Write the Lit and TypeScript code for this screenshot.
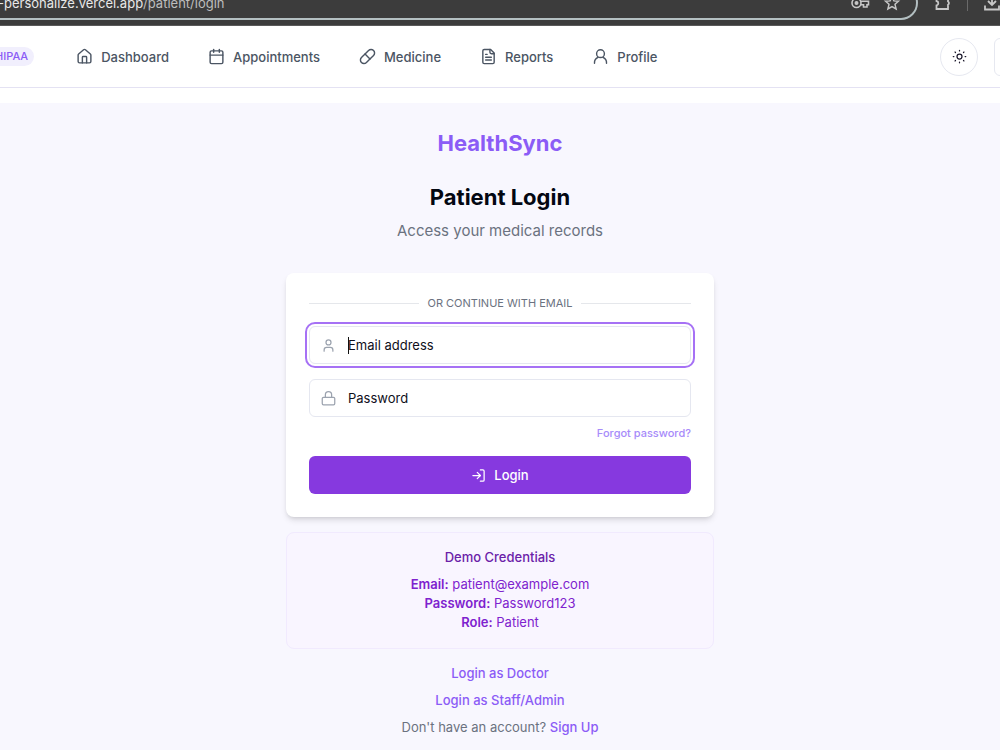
import { LitElement, html, css, svg } from "lit";
import { customElement } from "lit/decorators.js";

const icon = (body: unknown, cls = "icon") => html`
  <svg class=${cls} viewBox="0 0 24 24" fill="none" stroke="currentColor" stroke-width="2"
    stroke-linecap="round" stroke-linejoin="round" aria-hidden="true">${body}</svg>`;

const house = svg`<path d="M15 21v-8a1 1 0 0 0-1-1h-4a1 1 0 0 0-1 1v8"/><path d="M3 10a2 2 0 0 1 .709-1.528l7-5.999a2 2 0 0 1 2.582 0l7 5.999A2 2 0 0 1 21 10v9a2 2 0 0 1-2 2H5a2 2 0 0 1-2-2z"/>`;
const calendar = svg`<path d="M8 2v4"/><path d="M16 2v4"/><rect width="18" height="18" x="3" y="4" rx="2"/><path d="M3 10h18"/>`;
const pill = svg`<path d="m10.5 20.5 10-10a4.95 4.95 0 1 0-7-7l-10 10a4.95 4.95 0 1 0 7 7Z"/><path d="m8.5 8.5 7 7"/>`;
const report = svg`<path d="M15 2H6a2 2 0 0 0-2 2v16a2 2 0 0 0 2 2h12a2 2 0 0 0 2-2V7Z"/><path d="M14 2v4a2 2 0 0 0 2 2h4"/><path d="M10 9H8"/><path d="M16 13H8"/><path d="M16 17H8"/>`;
const userRound = svg`<circle cx="12" cy="8" r="5.5"/><path d="M3.5 21.5a8.5 8.5 0 0 1 5-8.2M20.500 21.5a8.500 8.500 0 0 0-5-8.2"/>`;
const user = svg`<path d="M19 21v-2a4 4 0 0 0-4-4H9a4 4 0 0 0-4 4v2"/><circle cx="12" cy="7" r="4"/>`;
const lock = svg`<rect width="20" height="12" x="2" y="10" rx="2"/><path d="M7 10V6a5 5 0 0 1 10 0v4"/>`;
const login = svg`<path d="M15 3h4a2 2 0 0 1 2 2v14a2 2 0 0 1-2 2h-4"/><path d="m10 17 5-5-5-5"/><path d="M15 12H3"/>`;
const sun = svg`<circle cx="12" cy="12" r="4"/><path d="M12 2v1M12 21v1M4.900 4.900l.7.7M18.400 18.400l.7.7M2 12h1M21 12h1M5.600 18.400l-.7.7M19.100 4.900l-.7.7"/>`;

@customElement("browser-bar")
class BrowserBar extends LitElement {
  static styles = css`
    :host { display: block; }
    .bar {
      display: flex; align-items: flex-end; height: 20px; padding-bottom: 5px;
      overflow: hidden; background: #3c3c3c; border-bottom: 1px solid #5a5a5a;
      color: #c7c7c7; box-sizing: content-box;
    }
    .address {
      box-sizing: border-box; flex: 1; height: 34px; margin-left: -24px; padding: 0 15px 0 22px;
      display: flex; align-items: center; gap: 13px;
      border: 2px solid #b3bfc1; border-left: 0; border-radius: 0 17px 17px 0;
    }
    .url { flex: 1; font: 13px/20px Inter, "Liberation Sans", sans-serif; color: #e8e8e8; white-space: nowrap; }
    .path { color: #bdbdbd; }
    .tools { display: flex; align-items: center; height: 34px; padding-left: 16px; gap: 15px; margin-right: -1px; }
    .key { width: 20px; height: 18px; }
    .glyph { width: 18px; height: 18px; }
    .rule { width: 1px; height: 16px; background: #6a6a6a; }
  `;
  render() {
    return html`
      <div class="bar">
        <div class="address">
          <div class="url">-personalize.vercel.app<span class="path">/patient/login</span></div>
          <svg class="key" viewBox="0 0 20 18" fill="none" stroke="currentColor" stroke-width="1.600">
            <circle cx="6.500" cy="9" r="4.500"/><circle cx="6.500" cy="9" r="1.200" fill="currentColor"/>
            <path d="M10.500 7.200H18.500V10.800H17V13H13.500V10.800H10.500"/>
          </svg>
          <svg class="glyph" viewBox="0 0 18 18" fill="none" stroke="currentColor" stroke-width="1.500">
            <path d="m9 2.500 1.900 4.300 4.600.4-3.500 3.100 1.100 4.600L9 12.500l-4.100 2.400L6 10.300 2.500 7.200l4.600-.4z"/>
          </svg>
        </div>
        <div class="tools">
          <svg class="glyph" viewBox="0 0 18 18" fill="none" stroke="currentColor" stroke-width="1.800">
            <path d="M2.500 3H6a2 2 0 0 1 4 0h4v4.500a1.800 1.800 0 0 1 0 3.200V15H2.500v-3.500a2.300 2.300 0 0 0 0-4.500z"/>
          </svg>
          <span class="rule"></span>
          <svg class="glyph" viewBox="0 0 18 18" fill="none" stroke="currentColor" stroke-width="1.800">
            <path d="M9 1v10M5 7l4 4 4-4M2 11.500V15.500h14v-4"/>
          </svg>
        </div>
      </div>`;
  }
}

@customElement("site-nav")
class SiteNav extends LitElement {
  static styles = css`
    :host { display: block; font-family: Inter, "Liberation Sans", sans-serif; }
    .nav {
      display: flex; align-items: center; height: 61px; overflow: hidden;
      background: #fff; border-bottom: 1px solid #e4e2f3;
    }
    .badge {
      margin-left: -11px; padding: 0 6px; border-radius: 10px; background: #f1effd;
      color: #8b5cf6; font-size: 11px; line-height: 19px; font-weight: 500;
    }
    .links { display: flex; gap: 39px; margin-left: 42px; }
    .link {
      display: flex; align-items: center; gap: 8px; color: #4b5563; text-decoration: none;
      font-size: 13px; line-height: 20px; font-weight: 500;
    }
    .icon { width: 17px; height: 17px; }
    .actions { display: flex; gap: 16px; margin-left: auto; margin-right: -32px; }
    .round, .square {
      box-sizing: border-box; width: 38px; height: 38px; padding: 0; background: #fff;
      border: 1px solid #e6e8f0; color: #1e1b2e; display: grid; place-items: center;
    }
    .round { border-radius: 50%; }
    .square { border-radius: 6px; }
    .sun { width: 15px; height: 15px; }
  `;
  render() {
    const items = [
      ["Dashboard", house], ["Appointments", calendar], ["Medicine", pill],
      ["Reports", report], ["Profile", userRound],
    ] as const;
    return html`
      <nav class="nav">
        <span class="badge">HIPAA</span>
        <div class="links">
          ${items.map(([label, body]) => html`<a class="link" href="#">${icon(body)}<span>${label}</span></a>`)}
        </div>
        <div class="actions">
          <button class="round" aria-label="Toggle theme">${icon(sun, "sun")}</button>
          <button class="square" aria-label="Menu"></button>
        </div>
      </nav>`;
  }
}

@customElement("login-panel")
class LoginPanel extends LitElement {
  static styles = css`
    :host { display: block; font-family: Inter, "Liberation Sans", sans-serif; }
    .panel { max-width: 428px; margin: 0 auto; text-align: center; }
    .brand { margin: 0; font-size: 22px; line-height: 30px; font-weight: 700; color: #8b5cf6; }
    .title { margin: 24px 0 0; font-size: 22px; line-height: 30px; font-weight: 700; color: #030712; }
    .lead { margin: 7px 0 0; font-size: 15px; line-height: 24px; color: #6b7280; }
    .card {
      margin-top: 30px; padding: 23px; border-radius: 8px; background: #fff;
      box-shadow: 0 4px 6px -1px rgb(0 0 0 / 0.12), 0 2px 4px -2px rgb(0 0 0 / 0.12);
    }
    .divider { display: flex; align-items: center; gap: 8px; font-size: 11px; line-height: 15px; color: #6b7280; }
    .divider::before, .divider::after { content: ""; flex: 1; height: 1px; background: #e5e7eb; }
    .field {
      box-sizing: border-box; display: flex; align-items: center; gap: 12px; position: relative;
      height: 38px; margin-top: 15px; padding: 0 11px; border: 1px solid #e5e7f0; border-radius: 6px;
    }
    .active { outline: 2px solid #a671f5; outline-offset: 2px; }
    .icon { width: 15px; height: 15px; color: #9ca3af; }
    .input {
      flex: 1; min-width: 0; height: 20px; padding: 0; border: 0; outline: 0; background: none;
      font: 13px/20px Inter, "Liberation Sans", sans-serif; color: #0f0f1a;
    }
    .input::placeholder { color: #0f0f1a; opacity: 1; }
    .caret { position: absolute; left: 38px; top: 10px; width: 1px; height: 17px; background: #111; }
    .forgot { display: block; margin-top: 8px; text-align: right; font-size: 11px; line-height: 16px; font-weight: 500; }
    .forgot a { color: #a78bfa; text-decoration: none; }
    .submit {
      display: flex; align-items: center; justify-content: center; gap: 8px; width: 100%; height: 38px;
      margin-top: 15px; padding: 0; border: 0; border-radius: 6px; background: #8639df; color: #fff;
      font: 500 13px/20px Inter, "Liberation Sans", sans-serif;
    }
    .submit .icon { color: #fff; }
    .demo {
      margin-top: 15px; padding: 15px 15px 16px; border: 1px solid #f1eafe; border-radius: 8px;
      background: #f9f5ff; font-size: 13px; line-height: 19px; color: #7e22ce;
    }
    .demo-title { margin: 0 0 8px; font-size: 13px; line-height: 19px; font-weight: 500; color: #6b21a8; }
    .line { margin: 0; }
    .strong { font-weight: 600; }
    .alt { display: flex; flex-direction: column; align-items: center; gap: 8px; margin-top: 15px; font-size: 13px; line-height: 19px; color: #6b7280; }
    .alt a { color: #8b5cf6; font-weight: 500; text-decoration: none; }
  `;
  render() {
    return html`
      <div class="panel">
        <p class="brand">HealthSync</p>
        <h1 class="title">Patient Login</h1>
        <p class="lead">Access your medical records</p>
        <form class="card" @submit=${(e: Event) => e.preventDefault()}>
          <div class="divider">OR CONTINUE WITH EMAIL</div>
          <div class="field active">
            ${icon(user)}
            <input class="input" type="email" aria-label="Email address" placeholder="Email address">
            <span class="caret"></span>
          </div>
          <div class="field">
            ${icon(lock)}
            <input class="input" type="password" aria-label="Password" placeholder="Password">
          </div>
          <div class="forgot"><a href="#">Forgot password?</a></div>
          <button class="submit" type="submit">${icon(login)}<span>Login</span></button>
        </form>
        <section class="demo">
          <h2 class="demo-title">Demo Credentials</h2>
          <p class="line"><b class="strong">Email:</b> patient@example.com</p>
          <p class="line"><b class="strong">Password:</b> Password123</p>
          <p class="line"><b class="strong">Role:</b> Patient</p>
        </section>
        <div class="alt">
          <a href="#">Login as Doctor</a>
          <a href="#">Login as Staff/Admin</a>
          <span>Don't have an account? <a href="#">Sign Up</a></span>
        </div>
      </div>`;
  }
}

@customElement("app-root")
class AppRoot extends LitElement {
  static styles = css`
    :host { display: flex; flex-direction: column; min-height: 100vh; background: #fff; }
    .main { flex: 1; margin-top: 15px; padding: 25px 16px 12px; background: #f8f7fe; }
  `;
  render() {
    return html`
      <browser-bar></browser-bar>
      <site-nav></site-nav>
      <main class="main"><login-panel></login-panel></main>`;
  }
}
